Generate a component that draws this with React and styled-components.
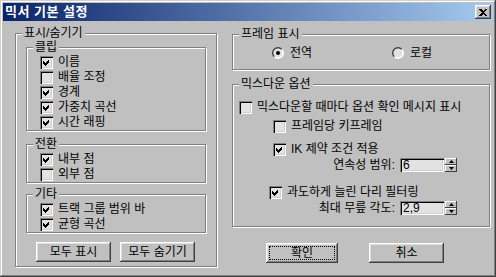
import React from "react";
import styled, { createGlobalStyle } from "styled-components";

const GlobalStyle = createGlobalStyle`
  html, body {
    margin: 0;
    padding: 0;
    background: #c0c0c0;
  }
  body {
    font-family: "Liberation Sans", "Noto Sans CJK KR", sans-serif;
    font-size: 12px;
    color: #000;
  }
`;

const Window = styled.div`
  width: 496px;
  height: 277px;
  box-sizing: border-box;
  padding: 3px;
  background: #c0c0c0;
  display: flex;
  flex-direction: column;
  box-shadow: inset -1px -1px #404040, inset 1px 1px #d4d0c8,
    inset -2px -2px #808080, inset 2px 2px #fff;
`;

const TitleBar = styled.div`
  height: 18px;
  display: flex;
  align-items: center;
  justify-content: space-between;
  padding: 0 2px;
  background: linear-gradient(to right, #0a246a, #a6caf0);
`;

const TitleText = styled.span`
  color: #fff;
  font-weight: bold;
  font-size: 13px;
  line-height: 18px;
  letter-spacing: 0.5px;
`;

const CloseButton = styled.div`
  width: 16px;
  height: 14px;
  background: #c0c0c0;
  display: flex;
  align-items: center;
  justify-content: center;
  box-shadow: inset -1px -1px #404040, inset 1px 1px #fff,
    inset -2px -2px #808080, inset 2px 2px #dfdfdf;
`;

const Body = styled.div`
  display: flex;
  gap: 15px;
  padding: 12px 0 0 12px;
`;

const Column = styled.div`
  display: flex;
  flex-direction: column;
  width: ${(p) => p.$w}px;
  padding-top: ${(p) => p.$pt || 0}px;
`;

const Group = styled.div`
  position: relative;
  box-sizing: border-box;
  height: ${(p) => p.$h}px;
  margin-top: ${(p) => p.$mt || 0}px;
  padding: ${(p) => p.$pad || "7px 0 0 0"};
  border: 1px solid #808080;
  box-shadow: 1px 1px 0 #fff, inset 1px 1px 0 #fff;
  display: flex;
  flex-direction: column;
`;

const Legend = styled.span`
  position: absolute;
  top: -8px;
  left: 6px;
  padding: 0 2px;
  background: #c0c0c0;
  line-height: 15px;
  white-space: nowrap;
`;

const Row = styled.div`
  display: flex;
  align-items: center;
  height: ${(p) => p.$h || 15}px;
  margin-top: ${(p) => p.$mt || 0}px;
  padding-left: ${(p) => p.$indent || 0}px;
  gap: 5px;
  white-space: nowrap;
  line-height: 15px;
`;

const FieldRow = styled(Row)`
  justify-content: flex-end;
  padding-right: 32px;
  gap: 0;
`;

const FieldLabel = styled.span`
  margin-right: 5px;
`;

const Box = styled.span`
  width: 13px;
  height: 13px;
  flex: none;
  background: #e2e2e2;
  box-shadow: inset 1px 1px 0 #808080, inset 2px 2px 0 #000,
    inset -1px -1px 0 #fff, inset -2px -2px 0 #d4d0c8;
  display: flex;
`;

const RadioWrap = styled.div`
  display: flex;
  align-items: center;
  gap: 6px;
  width: ${(p) => p.$w}px;
`;

const Edit = styled.div`
  width: 44px;
  height: 14px;
  box-sizing: border-box;
  padding: 0 3px;
  background: #e2e2e2;
  font-size: 12px;
  line-height: 14px;
  box-shadow: inset 1px 1px 0 #808080, inset 2px 2px 0 #000,
    inset -1px -1px 0 #fff, inset -2px -2px 0 #d4d0c8;
`;

const Spinner = styled.div`
  width: 12px;
  height: 14px;
  margin-left: 1px;
  display: flex;
  flex-direction: column;
`;

const SpinHalf = styled.div`
  height: 7px;
  background: #c0c0c0;
  display: flex;
  align-items: center;
  justify-content: center;
  box-shadow: inset -1px -1px #404040, inset 1px 1px #fff;
`;

const ButtonRow = styled.div`
  display: flex;
  gap: ${(p) => p.$gap}px;
  margin-top: ${(p) => p.$mt}px;
  padding-left: ${(p) => p.$indent}px;
`;

const Button = styled.div`
  width: ${(p) => p.$w || 75}px;
  height: 20px;
  box-sizing: border-box;
  display: flex;
  align-items: center;
  justify-content: center;
  background: #c0c0c0;
  line-height: 20px;
  box-shadow: inset -1px -1px #404040, inset 1px 1px #fff,
    inset -2px -2px #808080, inset 2px 2px #dfdfdf;
  outline: ${(p) => (p.$focus ? "1px dotted #000" : "none")};
  outline-offset: -4px;
`;

function CheckBox({ checked }) {
  return (
    <Box>
      {checked && (
        <svg width="13" height="13" viewBox="0 0 13 13" shapeRendering="crispEdges">
          <polygon points="3,5 5,7 9,3 9,6 5,10 3,8" fill="#000" />
        </svg>
      )}
    </Box>
  );
}

function Check({ checked, label, ...rest }) {
  return (
    <Row {...rest}>
      <CheckBox checked={checked} />
      <span>{label}</span>
    </Row>
  );
}

function Radio({ selected, label, w }) {
  return (
    <RadioWrap $w={w}>
      <svg width="12" height="12" viewBox="0 0 12 12">
        <defs>
          <linearGradient id="rg" x1="0" y1="0" x2="1" y2="1">
            <stop offset="0.45" stopColor="#404040" />
            <stop offset="0.55" stopColor="#ffffff" />
          </linearGradient>
        </defs>
        <circle cx="6" cy="6" r="5.3" fill="#e2e2e2" stroke="url(#rg)" strokeWidth="1.4" />
        {selected && <circle cx="6" cy="6" r="2" fill="#000" />}
      </svg>
      <span>{label}</span>
    </RadioWrap>
  );
}

function SpinField({ label, value, ...rest }) {
  return (
    <FieldRow $h={14} {...rest}>
      <FieldLabel>{label}</FieldLabel>
      <Edit>{value}</Edit>
      <Spinner>
        <SpinHalf>
          <svg width="5" height="3" viewBox="0 0 5 3">
            <polygon points="2.5,0 5,3 0,3" fill="#000" />
          </svg>
        </SpinHalf>
        <SpinHalf>
          <svg width="5" height="3" viewBox="0 0 5 3">
            <polygon points="0,0 5,0 2.5,3" fill="#000" />
          </svg>
        </SpinHalf>
      </Spinner>
    </FieldRow>
  );
}

export default function App() {
  return (
    <>
      <GlobalStyle />
      <Window>
        <TitleBar>
          <TitleText>믹서 기본 설정</TitleText>
          <CloseButton>
            <svg width="8" height="7" viewBox="0 0 8 7" shapeRendering="crispEdges">
              <path d="M0 0h2l2 2 2-2h2L5 3.5 8 7H6L4 5 2 7H0l3-3.5z" fill="#000" />
            </svg>
          </CloseButton>
        </TitleBar>
        <Body>
          <Column $w={202}>
            <Group $h={234} $pad="13px 10px 0 10px">
              <Legend>표시/숨기기</Legend>
              <Group $h={84} $pad="7px 0 0 13px">
                <Legend>클립</Legend>
                <Check checked label="이름" />
                <Check label="배율 조정" />
                <Check checked label="경계" />
                <Check checked label="가중치 곡선" />
                <Check checked label="시간 래핑" />
              </Group>
              <Group $h={39} $mt={13} $pad="7px 0 0 13px">
                <Legend>전환</Legend>
                <Check checked label="내부 점" />
                <Check label="외부 점" />
              </Group>
              <Group $h={39} $mt={11} $pad="7px 0 0 13px">
                <Legend>기타</Legend>
                <Check checked label="트랙 그룹 범위 바" />
                <Check checked label="균형 곡선" />
              </Group>
              <ButtonRow $gap={9} $mt={9} $indent={10}>
                <Button>모두 표시</Button>
                <Button>모두 숨기기</Button>
              </ButtonRow>
            </Group>
          </Column>
          <Column $w={258} $pt={1}>
            <Group $h={36} $pad="11px 0 0 39px">
              <Legend>프레임 표시</Legend>
              <Row $h={14} $indent={0}>
                <Radio selected label="전역" w={115} />
                <Radio label="로컬" w={60} />
              </Row>
            </Group>
            <Group $h={143} $mt={14} $pad="0">
              <Legend>믹스다운 옵션</Legend>
              <Check $mt={15} $indent={6} label="믹스다운할 때마다 옵션 확인 메시지 표시" />
              <Check $mt={4} $indent={40} label="프레임당 키프레임" />
              <Check $mt={8} $indent={40} checked label="IK 제약 조건 적용" />
              <SpinField $mt={1} label="연속성 범위:" value="6" />
              <Check $mt={13} $indent={36} checked label="과도하게 늘린 다리 필터링" />
              <SpinField $mt={1} label="최대 무릎 각도:" value="2,9" />
            </Group>
            <ButtonRow $gap={31} $mt={16} $indent={34}>
              <Button $w={72} $focus>확인</Button>
              <Button $w={75}>취소</Button>
            </ButtonRow>
          </Column>
        </Body>
      </Window>
    </>
  );
}
